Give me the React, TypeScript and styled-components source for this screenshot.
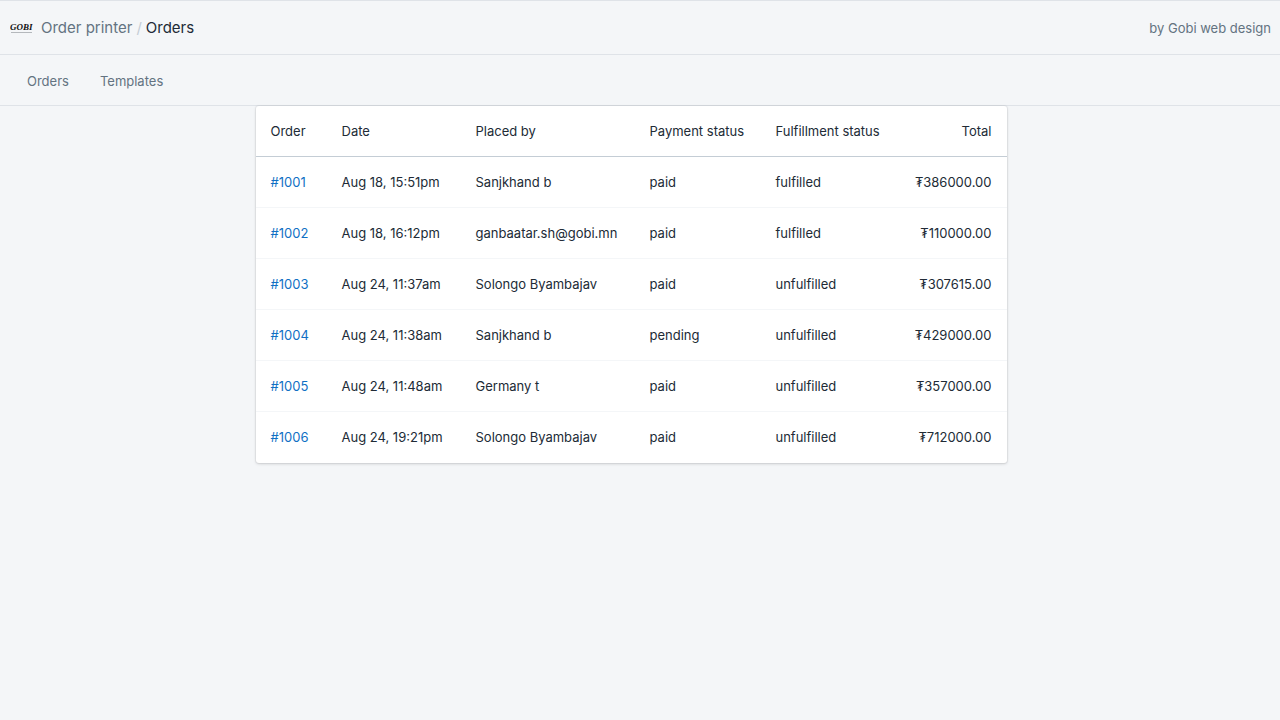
import React from "react";
import styled, { createGlobalStyle } from "styled-components";

const GlobalStyle = createGlobalStyle`
  * { box-sizing: border-box; }
  body {
    margin: 0;
    min-height: 100vh;
    background: #f4f6f8;
    color: #212b36;
    font-family: Inter, "Liberation Sans", sans-serif;
    font-size: 13px;
    line-height: 20px;
  }
`;

const TitleBar = styled.header`
  display: flex;
  align-items: center;
  justify-content: space-between;
  min-height: 55px;
  padding: 0 9px 0 10px;
  border-top: 1px solid #dfe3e8;
  border-bottom: 1px solid #dfe3e8;
`;

const Crumbs = styled.div`
  display: flex;
  align-items: center;
  font-size: 15px;
  color: #637381;
`;

const Logo = styled.svg`
  width: 23px;
  height: 22px;
  margin-right: 8px;
`;

const LogoText = styled.text`
  font-family: "Liberation Serif", serif;
  font-size: 9px;
  font-weight: 700;
  font-style: italic;
  fill: #111;
`;

const AppLink = styled.a`
  color: inherit;
  text-decoration: none;
`;

const Slash = styled.span`
  margin: 0 4px;
  color: #c4cdd5;
`;

const Current = styled.h1`
  margin: 0;
  font-size: inherit;
  font-weight: 400;
  color: #212b36;
`;

const Author = styled.span`
  color: #637381;
`;

const Nav = styled.nav`
  display: flex;
  align-items: center;
  gap: 31px;
  min-height: 51px;
  padding: 2px 27px 0;
  border-bottom: 1px solid #dfe3e8;
`;

const NavLink = styled.a`
  color: #637381;
  text-decoration: none;
`;

const Content = styled.main`
  display: flex;
  justify-content: center;
  padding: 0 18px 20px 0;
`;

const Card = styled.section`
  background: #fff;
  border-radius: 3px;
  box-shadow: 0 0 0 1px rgba(63, 63, 68, 0.05), 0 1px 3px rgba(63, 63, 68, 0.2);
`;

const Table = styled.table`
  width: 751px;
  table-layout: fixed;
  border-collapse: separate;
  border-spacing: 0;
`;

const HeadCell = styled.th<{ $end?: boolean; $width?: number }>`
  width: ${(p) => (p.$width ? `${p.$width}px` : "auto")};
  height: 51px;
  padding: 0 15px;
  border-bottom: 1px solid #c4cdd5;
  font-weight: 400;
  white-space: nowrap;
  text-align: ${(p) => (p.$end ? "right" : "left")};
`;

const Row = styled.tr`
  &:last-child > td {
    border-color: transparent;
  }
`;

const Cell = styled.td<{ $end?: boolean }>`
  height: 51px;
  padding: 0 15px;
  border-bottom: 1px solid #f4f6f8;
  white-space: nowrap;
  text-align: ${(p) => (p.$end ? "right" : "left")};
`;

const OrderLink = styled.a`
  color: #1070c4;
  text-decoration: none;
`;

const orders = [
  ["#1001", "Aug 18, 15:51pm", "Sanjkhand b", "paid", "fulfilled", "₮386000.00"],
  ["#1002", "Aug 18, 16:12pm", "ganbaatar.sh@gobi.mn", "paid", "fulfilled", "₮110000.00"],
  ["#1003", "Aug 24, 11:37am", "Solongo Byambajav", "paid", "unfulfilled", "₮307615.00"],
  ["#1004", "Aug 24, 11:38am", "Sanjkhand b", "pending", "unfulfilled", "₮429000.00"],
  ["#1005", "Aug 24, 11:48am", "Germany t", "paid", "unfulfilled", "₮357000.00"],
  ["#1006", "Aug 24, 19:21pm", "Solongo Byambajav", "paid", "unfulfilled", "₮712000.00"],
];

export default function App() {
  return (
    <>
      <GlobalStyle />
      <TitleBar>
        <Crumbs>
          <Logo viewBox="0 0 23 22" role="img" aria-label="Gobi">
            <LogoText x="0" y="13">GOBI</LogoText>
            <path d="M1 15.5H22" stroke="#b4b8bc" strokeWidth="1" />
          </Logo>
          <AppLink href="#">Order printer</AppLink>
          <Slash>/</Slash>
          <Current>Orders</Current>
        </Crumbs>
        <Author>by Gobi web design</Author>
      </TitleBar>
      <Nav>
        <NavLink href="#orders">Orders</NavLink>
        <NavLink href="#templates">Templates</NavLink>
      </Nav>
      <Content>
        <Card>
          <Table>
            <thead>
              <tr>
                <HeadCell $width={71}>Order</HeadCell>
                <HeadCell $width={134}>Date</HeadCell>
                <HeadCell $width={174}>Placed by</HeadCell>
                <HeadCell $width={126}>Payment status</HeadCell>
                <HeadCell $width={136}>Fulfillment status</HeadCell>
                <HeadCell $end>Total</HeadCell>
              </tr>
            </thead>
            <tbody>
              {orders.map(([id, date, by, pay, ful, total]) => (
                <Row key={id}>
                  <Cell><OrderLink href={id}>{id}</OrderLink></Cell>
                  <Cell>{date}</Cell>
                  <Cell>{by}</Cell>
                  <Cell>{pay}</Cell>
                  <Cell>{ful}</Cell>
                  <Cell $end>{total}</Cell>
                </Row>
              ))}
            </tbody>
          </Table>
        </Card>
      </Content>
    </>
  );
}
